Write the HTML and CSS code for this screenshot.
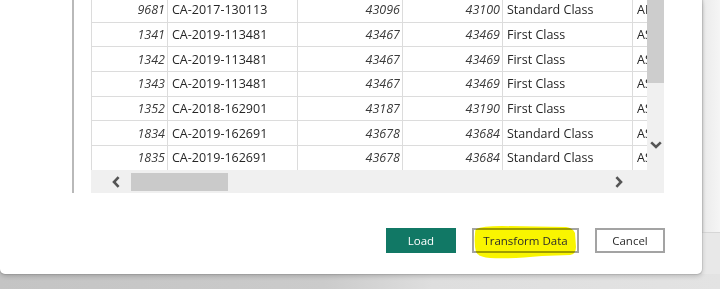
FILE: index.html
```html
<!DOCTYPE html>
<html lang="en">
<head>
    <meta charset="UTF-8">
    <meta name="viewport" content="width=device-width, initial-scale=1.0">
    <title>Navigator - Preview</title>
    <link rel="stylesheet" href="styles.css">
</head>
<body>
    <div class="screen">
        <div class="dialog">
            <div class="preview">
                <div class="grid">
                    <div class="table-clip">
                        <table class="data">
                            <colgroup>
                                <col style="width:76px">
                                <col style="width:130px">
                                <col style="width:105px">
                                <col style="width:100px">
                                <col style="width:130px">
                                <col style="width:120px">
                            </colgroup>
                            <tbody>
                                <tr><td class="num">9681</td><td>CA-2017-130113</td><td class="num">43096</td><td class="num">43100</td><td>Standard Class</td><td>AI-10855</td></tr>
                                <tr><td class="num">1341</td><td>CA-2019-113481</td><td class="num">43467</td><td class="num">43469</td><td>First Class</td><td>AS-10225</td></tr>
                                <tr><td class="num">1342</td><td>CA-2019-113481</td><td class="num">43467</td><td class="num">43469</td><td>First Class</td><td>AS-10225</td></tr>
                                <tr><td class="num">1343</td><td>CA-2019-113481</td><td class="num">43467</td><td class="num">43469</td><td>First Class</td><td>AS-10225</td></tr>
                                <tr><td class="num">1352</td><td>CA-2018-162901</td><td class="num">43187</td><td class="num">43190</td><td>First Class</td><td>AS-10285</td></tr>
                                <tr><td class="num">1834</td><td>CA-2019-162691</td><td class="num">43678</td><td class="num">43684</td><td>Standard Class</td><td>AS-10135</td></tr>
                                <tr><td class="num">1835</td><td>CA-2019-162691</td><td class="num">43678</td><td class="num">43684</td><td>Standard Class</td><td>AS-10135</td></tr>
                            </tbody>
                        </table>
                    </div>
                    <div class="vscroll">
                        <div class="vthumb"></div>
                        <svg class="arrow arrow-down" width="12" height="8" viewBox="0 0 12 8">
                            <path d="M1.2 1.4 L6 6 L10.8 1.4" />
                        </svg>
                    </div>
                    <div class="hscroll">
                        <svg class="arrow arrow-left" width="8" height="12" viewBox="0 0 8 12">
                            <path d="M6.6 1.2 L2 6 L6.6 10.8" />
                        </svg>
                        <div class="hthumb"></div>
                        <svg class="arrow arrow-right" width="8" height="12" viewBox="0 0 8 12">
                            <path d="M1.4 1.2 L6 6 L1.4 10.8" />
                        </svg>
                    </div>
                </div>
            </div>
            <div class="actions">
                <button class="btn btn-primary">Load</button>
                <button class="btn btn-secondary btn-marked">
                    <svg class="marker" width="107" height="36" viewBox="0 0 107 36">
                        <path d="M4 5 Q10 2 30 2 L94 3 Q101 4 103 9 L104 23 Q104 30 98 31 L70 32 Q40 35 18 34 Q6 33 4 28 Q2 20 3 10 Q3 6 4 5 Z" />
                    </svg>
                    <span class="label">Transform Data</span>
                </button>
                <button class="btn btn-secondary">Cancel</button>
            </div>
        </div>
        <div class="side">
            <div class="side-upper"></div>
            <div class="side-lower"></div>
        </div>
    </div>
</body>
</html>
```

FILE: styles.css
```css
html, body {
    margin: 0;
    height: 100%;
    overflow: hidden;
}
body {
    font-family: "Segoe UI", "Open Sans", "Noto Sans", sans-serif;
    background: linear-gradient(to right, #c4c4c4 0%, #cbcbcb 45%, #dedede 60%, #e3e3e3 100%);
}
.screen {
    display: flex;
    height: 274px;
}
.dialog {
    width: 702px;
    flex: none;
    background: #fff;
    border-radius: 0 0 5px 5px;
    box-shadow: 0 0 0 1px rgba(0,0,0,0.08), 0 2px 5px rgba(0,0,0,0.2);
    display: flex;
    flex-direction: column;
    position: relative;
    z-index: 1;
}
.side {
    flex: 1;
    display: flex;
    flex-direction: column;
}
.side-upper {
    height: 232px;
    background: linear-gradient(to right, #dadada 0, #ececec 3px, #f5f5f5 100%);
}
.side-lower {
    flex: 1;
    background: #e8e8e8;
    border-top: 1px solid #d6d6d6;
}

/* preview frame */
.preview {
    margin: -3px 0 0 72px;
    border-left: 2px solid #b9b9b9;
    padding-left: 17px;
    width: 573px;
}
.grid {
    display: grid;
    grid-template-columns: 556px 17px;
    grid-template-rows: 173px 23px;
}
.table-clip {
    overflow: hidden;
    grid-row: 1;
    grid-column: 1;
}
.data {
    border-collapse: collapse;
    table-layout: fixed;
    width: 661px;
}
.data td {
    border: 1px solid #dcdcdc;
    height: 24.7px;
    padding: 0 3px 0 4px;
    font-size: 12.5px;
    color: #262626;
    white-space: nowrap;
    overflow: hidden;
    box-sizing: border-box;
}
.data td.num {
    text-align: right;
    font-style: italic;
    color: #3a3a3a;
    padding-right: 2px;
}

/* scrollbars */
.vscroll {
    grid-row: 1 / 3;
    grid-column: 2;
    background: #f0f0f0;
    display: flex;
    flex-direction: column;
    align-items: center;
}
.vthumb {
    width: 17px;
    height: 86px;
    background: #cdcdcd;
}
.arrow path {
    fill: none;
    stroke: #555;
    stroke-width: 2.6;
}
.arrow-down {
    margin-top: 58px;
}
.hscroll {
    grid-row: 2;
    grid-column: 1;
    background: #f0f0f0;
    display: flex;
    align-items: center;
}
.arrow-left {
    margin-left: 21px;
}
.hthumb {
    width: 97px;
    height: 18px;
    margin-left: 11px;
    background: #cacaca;
}
.arrow-right {
    margin-left: auto;
    margin-right: 24px;
}

/* buttons */
.actions {
    display: flex;
    justify-content: flex-end;
    gap: 16px;
    padding-right: 37px;
    margin-top: 35px;
}
.btn {
    height: 25px;
    width: 70px;
    box-sizing: border-box;
    font-family: inherit;
    font-size: 11.5px;
    padding: 0;
    cursor: pointer;
}
.btn-primary {
    background: #117865;
    color: #fff;
    border: none;
}
.btn-secondary {
    background: #fff;
    color: #2b2b2b;
    border: 2px solid #a3a3a3;
}
.btn-marked {
    width: 107px;
    position: relative;
}
.marker {
    position: absolute;
    left: -2px;
    top: -6px;
    mix-blend-mode: multiply;
}
.marker path {
    fill: #f9f500;
}
.label {
    position: relative;
}
```
